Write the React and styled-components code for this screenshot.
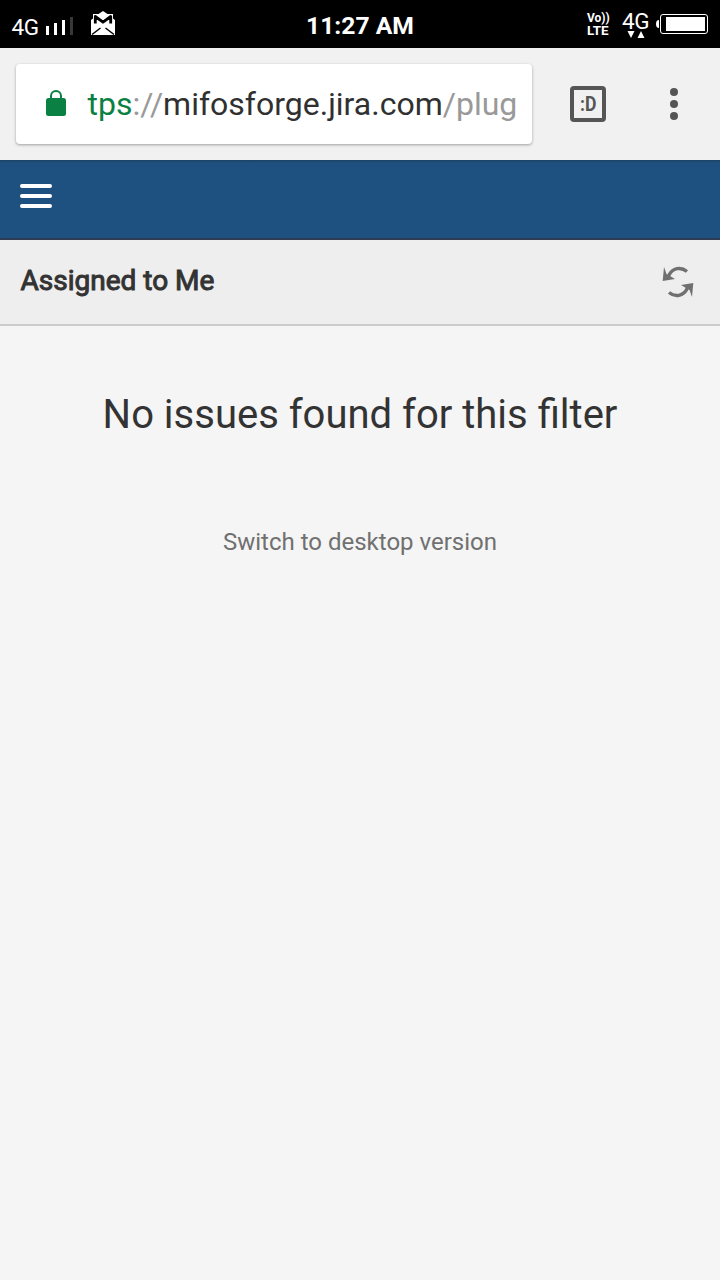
import React from "react";
import styled, { createGlobalStyle } from "styled-components";

const GlobalStyle = createGlobalStyle`
  * { box-sizing: border-box; }
  body { margin: 0; background: #f5f5f5; font-family: Roboto, "Liberation Sans", sans-serif; }
  svg { display: block; flex: none; }
`;

const Screen = styled.div`
  width: 720px;
  height: 1280px;
  display: flex;
  flex-direction: column;
  overflow: hidden;
  background: #f5f5f5;
`;

const StatusBar = styled.header`
  height: 48px;
  flex: none;
  display: grid;
  grid-template-columns: 1fr auto 1fr;
  background: #000;
  color: #fff;
`;

const StatusGroup = styled.div`
  display: flex;
  align-items: flex-start;
  justify-content: ${(p) => (p.$end ? "flex-end" : "flex-start")};
  padding: ${(p) => (p.$end ? "0 12px 0 0" : "0 0 0 11.5px")};
`;

const Network = styled.span`
  width: ${(p) => p.$width}px;
  padding-top: ${(p) => p.$top}px;
  font-size: 22.5px;
  line-height: 26px;
  letter-spacing: -0.3px;
  white-space: nowrap;
`;

const DataNetwork = styled.div`
  width: 34px;
  margin-left: 12px;
`;

const DataArrows = styled.svg`
  margin-top: -3px;
`;

const Clock = styled.time`
  padding-top: 11px;
  font-size: 24.7px;
  line-height: 30px;
  font-weight: 700;
`;

const VoLte = styled.div`
  display: flex;
  flex-direction: column;
  width: 23px;
  padding-top: 12px;
  font-weight: 700;
  line-height: 12.5px;
  white-space: nowrap;
`;

const VoLteLine = styled.span`
  font-size: ${(p) => p.$size}px;
`;

const BrowserBar = styled.div`
  height: 112px;
  flex: none;
  display: flex;
  align-items: center;
  padding-left: 16px;
  background: #f1f1f1;
`;

const AddressBox = styled.div`
  width: 516px;
  height: 80px;
  display: flex;
  align-items: center;
  padding-left: 30px;
  border-radius: 4px;
  background: #fff;
  box-shadow: 0 1px 3px rgba(0, 0, 0, 0.34);
`;

const LockIcon = styled.svg`
  margin-bottom: 2px;
`;

const Url = styled.span`
  margin-left: 21.5px;
  font-size: 32px;
  line-height: 40px;
  color: #999;
  white-space: nowrap;
`;

const Scheme = styled.span`
  color: #0b8043;
`;

const Host = styled.span`
  color: #303030;
`;

const TabCounter = styled.div`
  width: 36px;
  height: 36px;
  margin-left: 38px;
  display: flex;
  align-items: center;
  justify-content: center;
  border: 4px solid #555;
  border-radius: 4px;
  font: 700 20px/28px Roboto, sans-serif;
  color: #555;
`;

const TabCount = styled.span`
  transform: scaleX(0.88);
`;

const MoreMenu = styled.div`
  margin-left: 64px;
  display: flex;
  flex-direction: column;
  gap: 4px;
`;

const Dot = styled.i`
  width: 8px;
  height: 8px;
  border-radius: 50%;
  background: #555;
`;

const AppBar = styled.nav`
  height: 80px;
  flex: none;
  padding: 24px 20px 0;
  border-bottom: 2px solid #2e3d54;
  background: linear-gradient(#1d4265 0, #1e5180 3px);
`;

const Hamburger = styled.div`
  width: 32px;
  display: flex;
  flex-direction: column;
  gap: 6px;
`;

const HamburgerLine = styled.i`
  height: 4px;
  border-radius: 2px;
  background: #fff;
`;

const FilterHeader = styled.div`
  height: 86px;
  flex: none;
  display: flex;
  align-items: flex-start;
  justify-content: space-between;
  padding: 25px 26px 0 20.5px;
  border-bottom: 2px solid #ccc;
  background: #eee;
`;

const FilterTitle = styled.h1`
  margin: 0;
  font-size: 28px;
  line-height: 32px;
  font-weight: 400;
  -webkit-text-stroke: 1px #333;
  color: #333;
`;

const RefreshIcon = styled.svg`
  margin-top: 1px;
`;

const Content = styled.main`
  display: flex;
  flex-direction: column;
  align-items: center;
  padding-top: 63px;
`;

const EmptyMessage = styled.p`
  margin: 0;
  font-size: 40px;
  line-height: 52px;
  color: #333;
`;

const DesktopLink = styled.a`
  margin-top: 85px;
  font-size: 24px;
  line-height: 32px;
  color: #707070;
`;

export default function App() {
  return (
    <Screen>
      <GlobalStyle />
      <StatusBar>
        <StatusGroup>
          <Network $width={34.5} $top={14}>4G</Network>
          <svg width="28" height="48" viewBox="46 0 28 48" fill="#fff">
            <path d="M46 26h3v9h-3zM54 23h3v12h-3zM62 20h3v15h-3z" />
            <path d="M70 17h3v18h-3z" fill="#383838" />
          </svg>
          <svg width="46" height="48" viewBox="74 0 46 48">
            <path d="M91 20L93 18.500V14H98.500L103 11L107.500 14H113V18.500L115 20V35H91Z" fill="#fff" />
            <path d="M95.300 23.500V16.500L103 22.200L110.700 16.500V23.500" fill="none" stroke="#000" strokeWidth="2.800" strokeLinejoin="round" />
            <path d="M92 34.500L100.500 28M114 34.500L105.500 28" stroke="#000" strokeWidth="1.500" />
          </svg>
        </StatusGroup>
        <Clock>11:27 AM</Clock>
        <StatusGroup $end>
          <VoLte>
            <VoLteLine $size={12}>Vo))</VoLteLine>
            <VoLteLine $size={13.4}>LTE</VoLteLine>
          </VoLte>
          <DataNetwork>
            <Network as="div" $width={34} $top={8}>4G</Network>
            <DataArrows width="28" height="7" viewBox="0 0 28 7" fill="#fff">
              <path d="M5.500 0h7l-3.500 7zM15.500 7h7l-3.500-7z" />
            </DataArrows>
          </DataNetwork>
          <svg width="52" height="48" viewBox="656 0 52 48">
            <path d="M659 20Q656 20 656 24T659 28Z" fill="#fff" />
            <rect x="660.500" y="14.500" width="47" height="19" rx="2.500" fill="none" stroke="#fff" />
            <path d="M666 17h39v14h-39z" fill="#fff" />
          </svg>
        </StatusGroup>
      </StatusBar>
      <BrowserBar>
        <AddressBox>
          <LockIcon width="20" height="26" viewBox="0 0 20 26">
            <rect y="8" width="20" height="18" rx="2.500" fill="#0b8043" />
            <path d="M5 9V6a5 5 0 0 1 10 0v3" fill="none" stroke="#0b8043" strokeWidth="2" />
          </LockIcon>
          <Url><Scheme>tps</Scheme>://<Host>mifosforge.jira.com</Host>/plug</Url>
        </AddressBox>
        <TabCounter><TabCount>:D</TabCount></TabCounter>
        <MoreMenu><Dot /><Dot /><Dot /></MoreMenu>
      </BrowserBar>
      <AppBar>
        <Hamburger><HamburgerLine /><HamburgerLine /><HamburgerLine /></Hamburger>
      </AppBar>
      <FilterHeader>
        <FilterTitle>Assigned to Me</FilterTitle>
        <RefreshIcon width="32" height="32" viewBox="662 266 32 32">
          <g id="arrow">
            <path d="M687 271.500C681 266.500 672.500 267.500 668.500 276" fill="none" stroke="#707070" strokeWidth="3.400" />
            <path d="M664 267L662.700 281L675 279L670 276L666.500 274Z" fill="#707070" />
          </g>
          <use href="#arrow" transform="rotate(180 678 282)" />
        </RefreshIcon>
      </FilterHeader>
      <Content>
        <EmptyMessage>No issues found for this filter</EmptyMessage>
        <DesktopLink>Switch to desktop version</DesktopLink>
      </Content>
    </Screen>
  );
}
